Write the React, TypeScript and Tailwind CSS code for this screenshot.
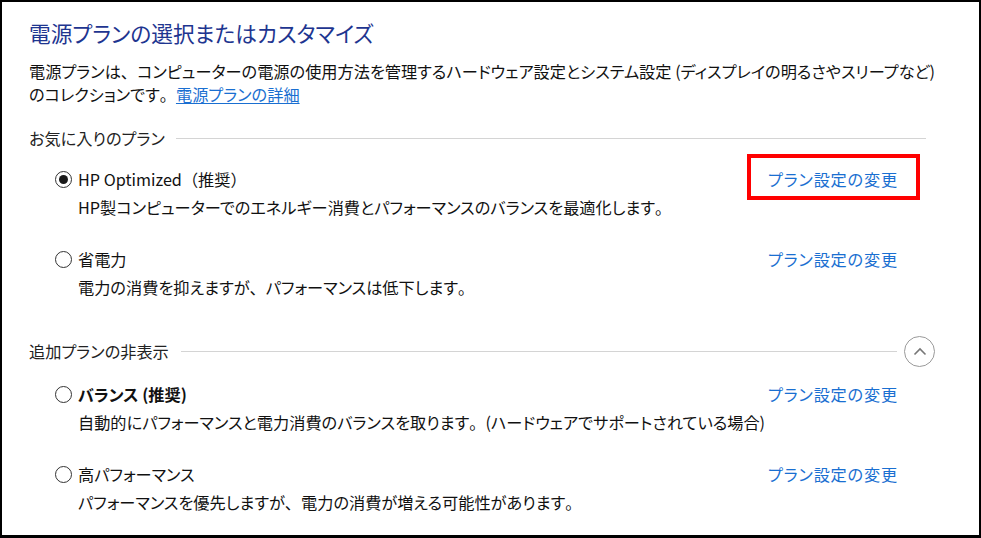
import React from "react";

const P = ({ t }: { t: string }) => {
  const parts = t.split(/([、。（）])/);
  return (
    <>
      {parts.map((p, i) =>
        /^[、。（）]$/.test(p) ? (
          <span key={i} className="[font-feature-settings:normal]">
            {p}
          </span>
        ) : (
          <React.Fragment key={i}>{p}</React.Fragment>
        )
      )}
    </>
  );
};

const Radio = ({ checked }: { checked?: boolean }) => (
  <span className="flex h-[17px] w-[17px] shrink-0 items-center justify-center rounded-full border-[1.5px] border-[#333333] bg-white">
    {checked && <span className="h-[9px] w-[9px] rounded-full bg-[#1a1a1a]" />}
  </span>
);

const Link = ({ boxed }: { boxed?: boolean }) => (
  <span className="relative mr-[28px] shrink-0 tracking-[0.8px] text-[#1a6fd1]">
    プラン設定の変更
    {boxed && (
      <span className="pointer-events-none absolute left-[-21px] right-[-22px] top-[-13px] bottom-[-9px] border-[4px] border-[#ff0000]" />
    )}
  </span>
);

const Plan = ({
  name,
  desc,
  checked,
  bold,
  boxed,
}: {
  name: string;
  desc: string;
  checked?: boolean;
  bold?: boolean;
  boxed?: boolean;
}) => (
  <div className="pl-[26px]">
    <div className="flex h-[28px] items-center">
      <Radio checked={checked} />
      <span className={`ml-[6px] flex-1 ${bold ? "font-bold" : ""}`}>
        <P t={name} />
      </span>
      <Link boxed={boxed} />
    </div>
    <div className="flex h-[28px] items-center pl-[23px]">
      <span>
        <P t={desc} />
      </span>
    </div>
  </div>
);

export default function App() {
  return (
    <div className="h-[538px] w-[981px] overflow-hidden border-2 border-b-[3px] border-black bg-white font-['Noto_Sans_CJK_JP','Noto_Sans',sans-serif] text-[16.2px] text-[#111111] [font-feature-settings:'palt']">
      <div className="pl-[27px] pr-[53px] pt-[17px]">
        <div className="flex h-[28px] items-center text-[21.7px] text-[#1e3590]">
          電源プランの選択またはカスタマイズ
        </div>
        <div className="mt-[13px] mr-[-14px] leading-[23px]">
          <P t="電源プランは、コンピューターの電源の使用方法を管理するハードウェア設定とシステム設定 (ディスプレイの明るさやスリープなど)" />
          <br />
          <P t="のコレクションです。" />
          <span className="text-[#1a6fd1] underline underline-offset-2">電源プランの詳細</span>
        </div>

        <div className="mt-[18px] flex h-[28px] items-center text-[#222222]">
          <span>お気に入りのプラン</span>
          <span className="ml-[11px] h-px flex-1 bg-[#d4d4d4]" />
        </div>

        <div className="mt-[13px]">
          <Plan name="HP Optimized（推奨）" desc="HP製コンピューターでのエネルギー消費とパフォーマンスのバランスを最適化します。" checked boxed />
        </div>
        <div className="mt-[24px]">
          <Plan name="省電力" desc="電力の消費を抑えますが、パフォーマンスは低下します。" />
        </div>

        <div className="mt-[36px] mr-[-9px] flex h-[28px] items-center text-[#222222]">
          <span>追加プランの非表示</span>
          <span className="ml-[12px] h-px flex-1 bg-[#d4d4d4]" />
          <span className="ml-[7px] flex h-[31px] w-[31px] items-center justify-center rounded-full border-[1.5px] border-[#9a9a9a]">
            <svg width="14" height="9" viewBox="0 0 14 9" fill="none">
              <path d="M1.5 7.5 L7 2 L12.5 7.5" stroke="#777777" strokeWidth="1.6" />
            </svg>
          </span>
        </div>

        <div className="mt-[15px]">
          <Plan
            name="バランス (推奨)"
            desc="自動的にパフォーマンスと電力消費のバランスを取ります。(ハードウェアでサポートされている場合)"
            bold
          />
        </div>
        <div className="mt-[24px]">
          <Plan name="高パフォーマンス" desc="パフォーマンスを優先しますが、電力の消費が増える可能性があります。" />
        </div>
      </div>
    </div>
  );
}
